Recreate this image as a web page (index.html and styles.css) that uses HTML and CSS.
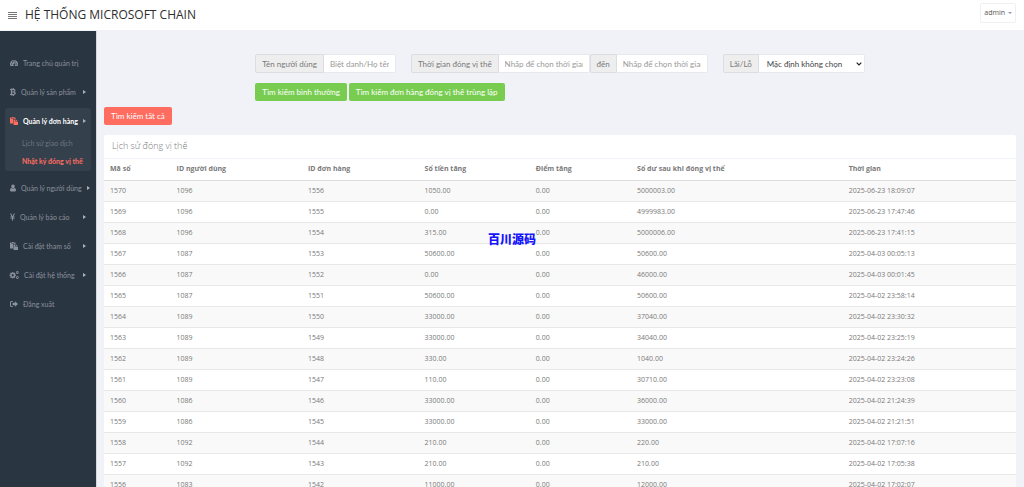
FILE: index.html
```html
<!DOCTYPE html>
<html lang="vi">
<head>
  <meta charset="UTF-8">
  <meta name="viewport" content="width=device-width, initial-scale=1.0">
  <title>HỆ THỐNG MICROSOFT CHAIN</title>
  <link rel="stylesheet" href="styles.css">
</head>
<body>
  <header class="topbar">
    <button class="toggle" type="button" aria-label="Menu">
      <svg viewBox="0 0 9 7"><path d="M0 0h9v1H0zM0 2h9v1H0zM0 4h9v1H0zM0 6h9v1H0z" fill="currentColor"/></svg>
    </button>
    <h1 class="brand">HỆ THỐNG MICROSOFT CHAIN</h1>
    <button class="account" type="button">admin <span class="caret"></span></button>
  </header>

  <div class="layout">
    <nav class="sidebar">
      <ul class="menu">
        <li class="menu-item">
          <a href="#">
            <svg class="icon" viewBox="0 0 16 16"><path fill-rule="evenodd" d="M8 2a8 8 0 0 0-7 12h14A8 8 0 0 0 8 2zM3.2 8.800a1.200 1.200 0 1 0 .1 0zM4.900 4.700a1.200 1.200 0 1 0 .1 0zM8 3.200a1.200 1.200 0 1 0 .1 0zM12.700 8.800a1.200 1.200 0 1 0 .1 0zM10.400 5l-1.700 4.700a2 2 0 1 0 1.100.3l1.700-4.500z"/></svg>
            <span>Trang chủ quản trị</span>
          </a>
        </li>
        <li class="menu-item">
          <a href="#">
            <svg class="icon narrow" viewBox="0 0 12 16"><path fill-rule="evenodd" d="M0 2h3V0h1.700v2h1.300V0h1.700v2.200c4.200.4 4 4.400 1.400 5.300C13 8.500 12.400 13.600 7.700 13.900V16H6v-2H4.700v2H3v-2H0v-2h1.700V4H0zM4.300 4v3H6c3 0 3-3 0-3zM4.300 9v3h2c3.600 0 3.600-3 0-3z"/></svg>
            <span>Quản lý sản phẩm</span><i class="arrow"></i>
          </a>
        </li>
        <li class="menu-item open">
          <a href="#">
            <svg class="icon" viewBox="0 0 16 16"><path d="M0 1h2.500v2h6V1H11v3H6v9H0zM3.500 0h4v2h-4zM7 5h4v5h5v6H7zM12 5l4 4h-4z"/></svg>
            <span>Quản lý đơn hàng</span><i class="arrow"></i>
          </a>
          <ul class="submenu">
            <li><a href="#">Lịch sử giao dịch</a></li>
            <li><a class="current" href="#">Nhật ký đóng vị thế</a></li>
          </ul>
        </li>
        <li class="menu-item">
          <a href="#">
            <svg class="icon narrow" viewBox="0 0 14 16"><path d="M7 0a4 4 0 0 1 4 4.500C11 7 9 9 7 9S3 7 3 4.500A4 4 0 0 1 7 0zM3.500 8c2 2.500 5 2.500 7 0 2.500.3 3.500 2.500 3.500 5.500 0 1.500-1 2.500-2.500 2.500h-9C1 16 0 15 0 13.500 0 10.500 1 8.300 3.500 8z"/></svg>
            <span>Quản lý người dùng</span><i class="arrow"></i>
          </a>
        </li>
        <li class="menu-item">
          <a href="#">
            <svg class="icon slim" viewBox="0 0 10 16"><path d="M0 1h2.300L5 6.300 7.700 1H10L7 7h2.200v1.400H6.200v1.200h3V11h-3v4H3.800v-4h-3V9.600h3V8.400h-3V7H3z"/></svg>
            <span>Quản lý báo cáo</span><i class="arrow"></i>
          </a>
        </li>
        <li class="menu-item">
          <a href="#">
            <svg class="icon" viewBox="0 0 16 16"><path d="M0 1h2.500v2h6V1H11v3H6v9H0zM3.500 0h4v2h-4zM7 5h4v5h5v6H7zM12 5l4 4h-4z"/></svg>
            <span>Cài đặt tham số</span><i class="arrow"></i>
          </a>
        </li>
        <li class="menu-item">
          <a href="#">
            <svg class="icon wide" viewBox="0 0 18 16"><path fill-rule="evenodd" d="M4.500 2h2l.4 1.700 1 .4 1.500-.9L10.800 4.600l-.9 1.500.4 1 1.700.4v2l-1.700.4-.4 1 .9 1.500-1.400 1.400-1.500-.9-1 .4-.4 1.700h-2l-.4-1.700-1-.4-1.500.9L.2 12.400l.9-1.500-.4-1L-1 9.500v-2l1.700-.4.4-1L.2 4.600l1.400-1.400 1.500.9 1-.4zM5.500 6.200a2.300 2.300 0 1 0 .1 0zM14 0h1.400l.3 1.200 1.200-.3.7 1.200-.8.900.8.900-.7 1.200-1.200-.3L15.400 6H14l-.3-1.200-1.200.3-.7-1.200.8-.9-.8-.9.700-1.200 1.200.3zM14.700 2a1 1 0 1 0 .1 0zM14 10h1.400l.3 1.200 1.200-.3.7 1.200-.8.900.8.900-.7 1.200-1.200-.3-.3 1.200H14l-.3-1.200-1.200.3-.7-1.200.8-.9-.8-.9.700-1.200 1.200.3zM14.700 12a1 1 0 1 0 .1 0z"/></svg>
            <span>Cài đặt hệ thống</span><i class="arrow"></i>
          </a>
        </li>
        <li class="menu-item">
          <a href="#">
            <svg class="icon" viewBox="0 0 16 16"><path d="M6 2v1.500H3.500C2.500 3.500 2 4 2 5v6c0 1 .5 1.500 1.500 1.500H6V14H3.200C1.200 14 0 12.800 0 11V5c0-1.800 1.200-3 3.200-3zM10 2.500L16 8l-6 5.500V10.500H5v-5h5z"/></svg>
            <span>Đăng xuất</span>
          </a>
        </li>
      </ul>
    </nav>

    <main class="content">
      <form class="filters">
        <div class="filter-row">
          <div class="group">
            <label class="addon" for="username">Tên người dùng</label>
            <input class="field name" id="username" type="text" placeholder="Biệt danh/Họ tên">
          </div>
          <div class="group">
            <label class="addon" for="start">Thời gian đóng vị thế</label>
            <input class="field date" id="start" type="text" placeholder="Nhấp để chọn thời gian">
            <label class="addon" for="end">đến</label>
            <input class="field date" id="end" type="text" placeholder="Nhấp để chọn thời gian">
          </div>
          <div class="group">
            <label class="addon" for="ploss">Lãi/Lỗ</label>
            <select class="field choice" id="ploss">
              <option>Mặc định không chọn</option>
            </select>
          </div>
        </div>
        <div class="actions">
          <button class="btn btn-success" type="button">Tìm kiếm bình thường</button>
          <button class="btn btn-success" type="button">Tìm kiếm đơn hàng đóng vị thế trùng lặp</button>
        </div>
      </form>
      <button class="btn btn-danger" type="button">Tìm kiếm tất cả</button>

      <section class="panel">
        <h2 class="panel-title">Lịch sử đóng vị thế</h2>
        <table class="records">
          <colgroup>
            <col class="col-code"><col class="col-user"><col class="col-order"><col class="col-amount"><col class="col-points"><col class="col-balance"><col>
          </colgroup>
          <thead>
            <tr><th>Mã số</th><th>ID người dùng</th><th>ID đơn hàng</th><th>Số tiền tăng</th><th>Điểm tăng</th><th>Số dư sau khi đóng vị thế</th><th>Thời gian</th></tr>
          </thead>
          <tbody>
            <tr><td>1570</td><td>1096</td><td>1556</td><td>1050.00</td><td>0.00</td><td>5000003.00</td><td>2025-06-23 18:09:07</td></tr>
            <tr><td>1569</td><td>1096</td><td>1555</td><td>0.00</td><td>0.00</td><td>4999983.00</td><td>2025-06-23 17:47:46</td></tr>
            <tr><td>1568</td><td>1096</td><td>1554</td><td>315.00</td><td>0.00</td><td>5000006.00</td><td>2025-06-23 17:41:15</td></tr>
            <tr><td>1567</td><td>1087</td><td>1553</td><td>50600.00</td><td>0.00</td><td>50600.00</td><td>2025-04-03 00:05:13</td></tr>
            <tr><td>1566</td><td>1087</td><td>1552</td><td>0.00</td><td>0.00</td><td>46000.00</td><td>2025-04-03 00:01:45</td></tr>
            <tr><td>1565</td><td>1087</td><td>1551</td><td>50600.00</td><td>0.00</td><td>50600.00</td><td>2025-04-02 23:58:14</td></tr>
            <tr><td>1564</td><td>1089</td><td>1550</td><td>33000.00</td><td>0.00</td><td>37040.00</td><td>2025-04-02 23:30:32</td></tr>
            <tr><td>1563</td><td>1089</td><td>1549</td><td>33000.00</td><td>0.00</td><td>34040.00</td><td>2025-04-02 23:25:19</td></tr>
            <tr><td>1562</td><td>1089</td><td>1548</td><td>330.00</td><td>0.00</td><td>1040.00</td><td>2025-04-02 23:24:26</td></tr>
            <tr><td>1561</td><td>1089</td><td>1547</td><td>110.00</td><td>0.00</td><td>30710.00</td><td>2025-04-02 23:23:08</td></tr>
            <tr><td>1560</td><td>1086</td><td>1546</td><td>33000.00</td><td>0.00</td><td>36000.00</td><td>2025-04-02 21:24:39</td></tr>
            <tr><td>1559</td><td>1086</td><td>1545</td><td>33000.00</td><td>0.00</td><td>33000.00</td><td>2025-04-02 21:21:51</td></tr>
            <tr><td>1558</td><td>1092</td><td>1544</td><td>210.00</td><td>0.00</td><td>220.00</td><td>2025-04-02 17:07:16</td></tr>
            <tr><td>1557</td><td>1092</td><td>1543</td><td>210.00</td><td>0.00</td><td>210.00</td><td>2025-04-02 17:05:38</td></tr>
            <tr><td>1556</td><td>1083</td><td>1542</td><td>11000.00</td><td>0.00</td><td>12000.00</td><td>2025-04-02 17:02:07</td></tr>
          </tbody>
        </table>
      </section>
    </main>
  </div>
  <div class="watermark">百川源码</div>
</body>
</html>
```
FILE: styles.css
```css
* {
  box-sizing: border-box;
}
html {
  scrollbar-width: none;
}
body {
  margin: 0;
  min-height: 100vh;
  display: flex;
  flex-direction: column;
  font-family: "Open Sans", "Noto Sans", sans-serif;
  font-size: 7px;
  line-height: 10px;
  color: #797979;
  background: #f1f2f7;
}
button, input, select {
  font: inherit;
}
a {
  color: inherit;
  text-decoration: none;
}
ul {
  margin: 0;
  padding: 0;
  list-style: none;
}

/* top bar */
.topbar {
  display: flex;
  align-items: center;
  height: 31px;
  padding: 0 8px;
  background: #fff;
  border-bottom: 1px solid #f1f2f7;
}
.toggle {
  padding: 0;
  border: 0;
  background: none;
  color: #777;
}
.toggle svg {
  display: block;
  width: 9px;
  height: 7px;
}
.brand {
  flex: 1;
  margin: 0 0 0 8px;
  font-size: 12px;
  font-weight: 400;
  line-height: 18px;
  color: #2e2e2e;
}
.account {
  align-self: flex-start;
  display: flex;
  align-items: center;
  gap: 3px;
  height: 20px;
  margin-top: 3px;
  padding: 0 3px;
  border: 1px solid #f0f0f2;
  border-radius: 2px;
  background: #fff;
  color: #555;
}
.caret {
  border: 2px solid transparent;
  border-top-color: #8b97a8;
  border-bottom: 0;
}

/* sidebar */
.layout {
  display: flex;
  flex: 1;
}
.sidebar {
  flex: 0 0 97px;
  min-width: 0;
  padding: 19px 5px 0;
  font-family: Lato, "Open Sans", sans-serif;
  background: #2a3542;
  border-right: 1px solid #d5d7de;
}
.menu {
  display: flex;
  flex-direction: column;
  gap: 4px;
  color: #8a919b;
}
.menu-item {
  border-radius: 3px;
}
.menu-item > a {
  display: flex;
  align-items: center;
  gap: 5px;
  height: 25px;
  padding: 0 5px;
  white-space: nowrap;
}
.icon {
  flex: none;
  width: 8px;
  height: 8px;
  fill: currentColor;
  overflow: visible;
}
.icon.narrow {
  width: 6px;
}
.icon.slim {
  width: 5px;
}
.icon.wide {
  width: 9px;
}
.arrow {
  margin-left: auto;
  border: 2px solid transparent;
  border-left: 3px solid #aeb2b7;
  border-right: 0;
}
.open {
  background: #35404d;
}
.open > a {
  color: #fff;
  font-weight: 700;
}
.open .icon {
  color: #ff6c60;
}
.submenu {
  padding: 1px 0;
}
.submenu a {
  display: block;
  padding: 4px 0 4px 17px;
  white-space: nowrap;
  color: #6b7480;
}
.submenu a.current {
  color: #ff6c60;
  font-weight: 700;
}

/* main area */
.content {
  flex: 1;
  min-width: 0;
  padding: 23px 8px 0 7px;
}
.filters {
  width: fit-content;
  margin: 0 auto 6px;
}
.filters,
.btn {
  font-family: Lato, "Open Sans", sans-serif;
  font-size: 8px;
}
.filter-row {
  display: flex;
  gap: 15px;
}
.group {
  display: flex;
  height: 19px;
}
.addon {
  display: flex;
  align-items: center;
  padding: 0 6px;
  border: 1px solid #dcdde2;
  border-radius: 2px 0 0 2px;
  background: #eee;
  white-space: nowrap;
}
.field {
  padding: 0 6px;
  border: 1px solid #e6e8ed;
  border-left: 0;
  border-radius: 0 2px 2px 0;
  background: #fff;
  color: #444;
}
.field::placeholder {
  color: #999;
}
.name {
  width: 72px;
}
.date {
  width: 91px;
}
.choice {
  width: 106px;
  padding: 0 8px;
  appearance: none;
  background: #fff url("data:image/svg+xml,%3Csvg xmlns='http://www.w3.org/2000/svg' viewBox='0 0 6 4'%3E%3Cpath d='M.7.7L3 3 5.300.7' fill='none' stroke='%23222' stroke-width='1.200'/%3E%3C/svg%3E") no-repeat right 2px center / 6px 4px;
}
.actions {
  display: flex;
  gap: 2px;
  margin-top: 10px;
}
.btn {
  height: 18px;
  padding: 0 7px;
  border: 0;
  border-radius: 2px;
  color: #fff;
  white-space: nowrap;
}
.btn-success {
  background: #78cd51;
}
.btn-danger {
  display: block;
  background: #ff6c60;
}

/* records */
.panel {
  margin-top: 10px;
  border-radius: 2px;
  background: #fff;
}
.panel-title {
  margin: 0;
  padding: 5px 8px 6px;
  border-bottom: 1px solid #eff2f7;
  font-size: 9px;
  font-weight: 300;
  line-height: 12px;
}
.records {
  width: 100%;
  table-layout: fixed;
  border-collapse: collapse;
}
.records th,
.records td {
  height: 21px;
  padding: 0 6px;
  border-bottom: 1px solid #e8e8e8;
  text-align: left;
}
.records th {
  border-bottom-color: #ddd;
}
.records tbody tr:nth-child(odd) {
  background: #f9f9f9;
}
.col-code {
  width: 7.3%;
}
.col-user {
  width: 14.4%;
}
.col-order {
  width: 12.8%;
}
.col-amount {
  width: 12.2%;
}
.col-points {
  width: 11.1%;
}
.col-balance {
  width: 23.2%;
}

.watermark {
  position: absolute;
  top: 232px;
  left: 488px;
  font-family: "Noto Sans CJK SC", sans-serif;
  font-size: 12px;
  font-weight: 900;
  line-height: 14px;
  color: #1414ff;
}
```
